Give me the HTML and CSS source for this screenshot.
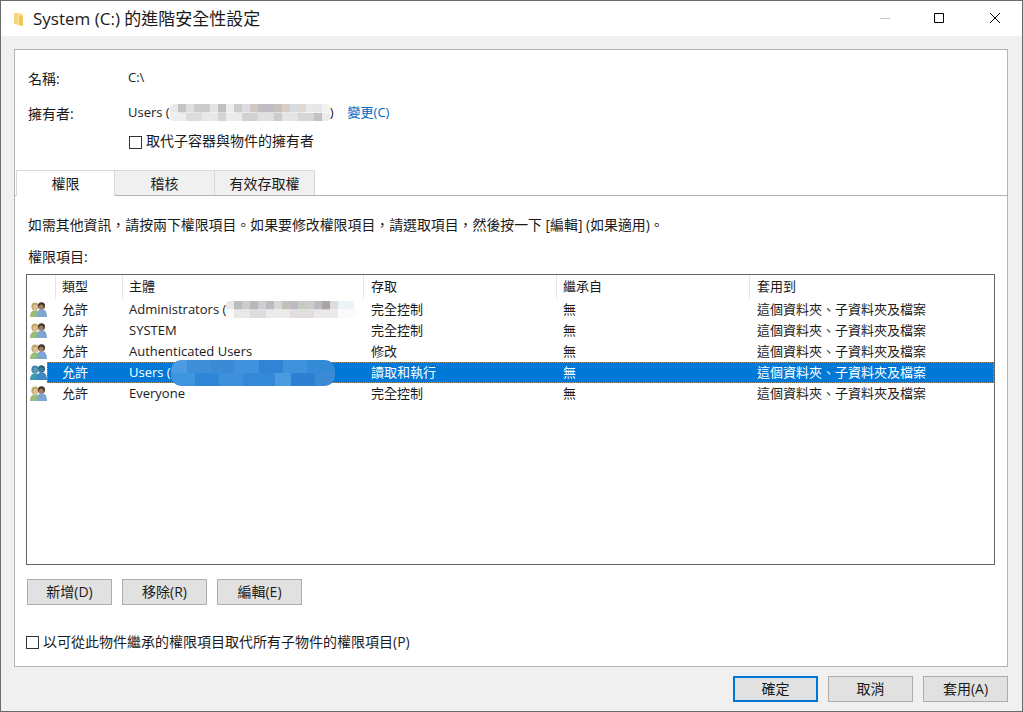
FILE: index.html
```html
<!DOCTYPE html>
<html lang="zh-Hant">
<head>
<meta charset="utf-8">
<title>System (C:) 的進階安全性設定</title>
<link rel="stylesheet" href="styles.css">
</head>
<body>
<svg class="defs" width="0" height="0" aria-hidden="true">
  <symbol id="people" viewBox="0 0 17 16">
    <ellipse class="p-hair1" cx="5" cy="4.5" rx="3.6" ry="4"/>
    <ellipse class="p-face1" cx="5.4" cy="5.6" rx="2.3" ry="2.8"/>
    <path class="p-body1" d="M0 15c0-4 1.500-6 3.500-6.500h3c2 .5 3.500 2.500 3.500 6.500z"/>
    <ellipse class="p-hair2" cx="11.500" cy="3.800" rx="3.500" ry="3.600"/>
    <ellipse class="p-face2" cx="11.300" cy="5.300" rx="2.300" ry="2.700"/>
    <path class="p-body2" d="M6.500 15c0-4 1.500-7 3.500-7.500h3.500c2 .5 3.500 3.500 3.500 7.500z"/>
  </symbol>
</svg>
<div class="window">
  <header class="titlebar">
    <svg class="folder" width="12" height="15" viewBox="0 0 12 15" aria-hidden="true">
      <path d="M1 1h5v12l-5-1z" fill="#f6d67a"/>
      <path d="M5 0.500l5 1.500v12l-5-1z" fill="#fbe49c"/>
      <path d="M6 3l4 1v10l-4-1z" fill="#efc55c"/>
    </svg>
    <h1 class="title">System (C:) 的進階安全性設定</h1>
    <div class="controls">
      <svg width="55" height="35" viewBox="0 0 55 35" aria-hidden="true"><path class="ctl-off" d="M23 17.500h10"/></svg>
      <svg width="55" height="35" viewBox="0 0 55 35" aria-hidden="true"><path class="ctl" d="M22.500 12.500h9v9h-9z"/></svg>
      <svg width="55" height="35" viewBox="0 0 55 35" aria-hidden="true"><path class="ctl" d="M23 12l10 10M33 12L23 22"/></svg>
    </div>
  </header>

  <main class="panel">
    <div class="info">
      <span class="label">名稱:</span>
      <span class="value">C:\</span>
      <span class="label">擁有者:</span>
      <span class="value">Users (<span class="mosaic mosaic-owner"></span>)<a class="link" href="#">變更(C)</a></span>
      <span></span>
      <label class="check check-top"><span class="box"></span>取代子容器與物件的擁有者</label>
    </div>

    <nav class="tabs">
      <span class="tab tab-active">權限</span>
      <span class="tab">稽核</span>
      <span class="tab">有效存取權</span>
    </nav>

    <p class="desc">如需其他資訊，請按兩下權限項目。如果要修改權限項目，請選取項目，然後按一下 [編輯] (如果適用)。</p>
    <p class="list-title">權限項目:</p>

    <section class="list">
      <div class="head">
        <span class="hcell hcell-icon"></span>
        <span class="hcell">類型</span>
        <span class="hcell">主體</span>
        <span class="hcell">存取</span>
        <span class="hcell">繼承自</span>
        <span class="hcell">套用到</span>
      </div>
      <div class="row">
        <svg class="icon"><use href="#people"/></svg>
        <div class="cells">
          <span class="cell cell-type">允許</span>
          <span class="cell">Administrators (<span class="mosaic mosaic-admin"></span></span>
          <span class="cell">完全控制</span>
          <span class="cell">無</span>
          <span class="cell">這個資料夾、子資料夾及檔案</span>
        </div>
      </div>
      <div class="row">
        <svg class="icon"><use href="#people"/></svg>
        <div class="cells">
          <span class="cell cell-type">允許</span>
          <span class="cell">SYSTEM</span>
          <span class="cell">完全控制</span>
          <span class="cell">無</span>
          <span class="cell">這個資料夾、子資料夾及檔案</span>
        </div>
      </div>
      <div class="row">
        <svg class="icon"><use href="#people"/></svg>
        <div class="cells">
          <span class="cell cell-type">允許</span>
          <span class="cell">Authenticated Users</span>
          <span class="cell">修改</span>
          <span class="cell">無</span>
          <span class="cell">這個資料夾、子資料夾及檔案</span>
        </div>
      </div>
      <div class="row row-selected">
        <svg class="icon"><use href="#people"/></svg>
        <div class="cells">
          <span class="cell cell-type">允許</span>
          <span class="cell">Users (<span class="mosaic mosaic-selected"></span></span>
          <span class="cell">讀取和執行</span>
          <span class="cell">無</span>
          <span class="cell">這個資料夾、子資料夾及檔案</span>
        </div>
      </div>
      <div class="row">
        <svg class="icon"><use href="#people"/></svg>
        <div class="cells">
          <span class="cell cell-type">允許</span>
          <span class="cell">Everyone</span>
          <span class="cell">完全控制</span>
          <span class="cell">無</span>
          <span class="cell">這個資料夾、子資料夾及檔案</span>
        </div>
      </div>
    </section>

    <div class="actions">
      <button class="btn" type="button">新增(D)</button>
      <button class="btn" type="button">移除(R)</button>
      <button class="btn" type="button">編輯(E)</button>
    </div>

    <label class="check check-bottom"><span class="box"></span>以可從此物件繼承的權限項目取代所有子物件的權限項目(P)</label>
  </main>

  <footer class="footer">
    <button class="btn btn-primary" type="button">確定</button>
    <button class="btn" type="button">取消</button>
    <button class="btn" type="button">套用(A)</button>
  </footer>
</div>
</body>
</html>
```
FILE: styles.css
```css
* { box-sizing: border-box; }
html, body { margin: 0; padding: 0; }
body {
  width: 1023px;
  height: 712px;
  overflow: hidden;
  background: #f0f0f0;
  color: #1a1a1a;
  font-family: "Open Sans", "Noto Sans CJK TC", sans-serif;
  font-size: 14px;
}
.defs { position: absolute; }

.window {
  width: 1023px;
  height: 712px;
  display: flex;
  flex-direction: column;
  border: 1px solid #6b6b6b;
  background: #f0f0f0;
}

.titlebar {
  height: 35px;
  flex: none;
  display: flex;
  align-items: center;
  background: #fff;
  padding-left: 12px;
}
.folder { flex: none; margin-top: 1px; }
.title {
  margin: -2px 0 0 8px;
  font-size: 17px;
  font-weight: 400;
  color: #1a1a1a;
  flex: 1;
  white-space: nowrap;
}
.controls { display: flex; align-self: flex-start; }
.controls svg { display: block; }
.ctl { fill: none; stroke: #000; stroke-width: 1; }
.ctl-off { fill: none; stroke: #c4c4c4; stroke-width: 1; }

.panel {
  flex: 1;
  min-height: 0;
  margin: 13px 14px 0 13px;
  background: #fff;
  border: 1px solid #b4b4b4;
  display: flex;
  flex-direction: column;
  padding: 19px 12px 16px 11px;
}

.info {
  display: grid;
  grid-template-columns: 100px 1fr;
  margin-left: 2px;
  row-gap: 16px;
  line-height: 18px;
}
.value { font-size: 13px; white-space: nowrap; margin-top: -1px; }
.label { font-size: 14px; margin-top: 1px; }
.link { color: #0067c0; text-decoration: none; margin-left: 14px; }
.check-top { margin-top: -7px; margin-left: 1px; }

.check {
  display: flex;
  align-items: center;
  height: 18px;
  font-size: 14px;
  white-space: nowrap;
}
.box {
  width: 13px;
  height: 13px;
  border: 1px solid #333;
  background: #fff;
  margin: 2px 4px 0 0;
  flex: none;
}
.check-bottom { margin-top: 27px; }
.check-bottom .box { margin-top: 3px; }

.tabs {
  display: flex;
  margin: 20px -12px 0 -11px;
  padding-left: 1px;
  height: 26px;
  border-bottom: 1px solid #b4b4b4;
  flex: none;
}
.tab {
  width: 100px;
  height: 25px;
  background: #f0f0f0;
  border: 1px solid #d9d9d9;
  border-bottom: 0;
  border-left: 0;
  text-align: center;
  line-height: 26px;
  font-size: 14px;
}
.tab-active {
  width: 99px;
  height: 26px;
  background: #fff;
  border-left: 1px solid #d9d9d9;
}

.desc {
  margin: 20px 0 0 2px;
  line-height: 18px;
  font-size: 13.900px;
  white-space: nowrap;
}
.list-title {
  margin: 14px 0 0 2px;
  line-height: 18px;
  font-size: 14px;
}

.list {
  flex: 1;
  min-height: 0;
  margin-top: 8px;
  border: 1px solid #646464;
  font-size: 13px;
}
.head {
  display: grid;
  grid-template-columns: 28px 67px 241px 193px 193px 1fr;
  height: 24px;
}
.hcell {
  border-left: 1px solid #e5e5e5;
  padding-left: 6px;
  line-height: 22px;
  white-space: nowrap;
}
.hcell:nth-child(4), .hcell:nth-child(6) { padding-left: 7px; }
.hcell-icon { padding: 0; border-left: 0; }
.row {
  display: flex;
  height: 21px;
}
.icon {
  width: 17px;
  height: 16px;
  flex: none;
  margin: 3px 0 0 3px;
}
.cells {
  flex: 1;
  display: grid;
  grid-template-columns: 74px 241px 193px 193px 1fr;
  border: 1px solid transparent;
}
.cell {
  padding-left: 7px;
  line-height: 19px;
  white-space: nowrap;
}
.cell:nth-child(3), .cell:nth-child(5) { padding-left: 8px; }
.cell-type { padding-left: 14px; }

.row-selected .cells {
  --dots-x: repeating-linear-gradient(90deg, #ee8a22 0 1px, #5f5a48 1px 2px);
  --dots-y: repeating-linear-gradient(180deg, #ee8a22 0 1px, #5f5a48 1px 2px);
  background:
    var(--dots-x) top / 100% 1px no-repeat border-box,
    var(--dots-x) bottom / 100% 1px no-repeat border-box,
    var(--dots-y) left / 1px 100% no-repeat border-box,
    var(--dots-y) right / 1px 100% no-repeat border-box,
    #0078d7 border-box;
  color: #fff;
}

.p-hair1 { fill: var(--hair1); }
.p-face1 { fill: var(--face1); }
.p-body1 { fill: var(--body1); }
.p-hair2 { fill: var(--hair2); }
.p-face2 { fill: var(--face2); }
.p-body2 { fill: var(--body2); }
.icon {
  --hair1: #bfa76a;
  --face1: #e0bf98;
  --body1: #97bd78;
  --hair2: #3f3228;
  --face2: #a97d5c;
  --body2: #7ea6d0;
}
.row-selected .icon {
  --hair1: #3f86a8;
  --face1: #5c9cbc;
  --body1: #3f9ab0;
  --hair2: #25607f;
  --face2: #3d7da0;
  --body2: #3f87c4;
}

.mosaic {
  display: inline-block;
  vertical-align: middle;
  background-repeat: no-repeat;
  background-size: 100% 50%;
  background-position: top, bottom;
  border-radius: 4px;
  filter: blur(0.6px);
}
.mosaic-owner {
  width: 160px;
  height: 17px;
  margin-top: -2px;
  background-image:
    linear-gradient(90deg, #e9e9e9 0 8px, #c4c4c4 8px 16px, #dedede 16px 24px, #cbcbcb 24px 40px, #e4e4e4 40px 48px, #bfbfbf 48px 56px, #ececec 56px 64px, #cccccc 64px 72px, #dcdce4 72px 80px, #cfc8c0 80px 88px, #bfbcc4 88px 104px, #c6c2bc 104px 112px, #dccdc4 112px 120px, #d3dde6 120px 128px, #dedad2 128px 136px, #e8e8e8 136px 152px, #f2f2f2 152px),
    linear-gradient(90deg, #eeeeee 0 16px, #dcdcdc 16px 32px, #e8e8e8 32px 48px, #d4d4d4 48px 56px, #ececec 56px 72px, #d2d2d2 72px 88px, #e0e0e0 88px 104px, #cccccc 104px 112px, #e4e4e4 112px 128px, #d6d6d6 128px 144px, #c2c2c2 144px 152px, #ececec 152px);
}
.mosaic-admin {
  width: 130px;
  height: 17px;
  margin-top: -2px;
  background-image:
    linear-gradient(90deg, #e8e8e8 0 8px, #bcbcbc 8px 16px, #cccccc 16px 24px, #b8b8b8 24px 32px, #d0ccd4 32px 40px, #bcbcbc 40px 48px, #d6d6d6 48px 56px, #c6c0ba 56px 64px, #bfb9c4 64px 72px, #c6ccc2 72px 80px, #cccccc 80px 88px, #bdbac2 88px 96px, #aaa4a4 96px 104px, #dcdcdc 104px 112px, #edf4f8 112px 128px, #fff 128px),
    linear-gradient(90deg, #fafafa 0 8px, #e8e8e8 8px 24px, #dddddd 24px 40px, #ebebeb 40px 64px, #e2dede 64px 88px, #ebe9e9 88px 112px, #fbfbfb 112px);
}
.mosaic-selected {
  width: 164px;
  height: 26px;
  margin: -7px 0 -5px 0;
  position: relative;
  border-radius: 10px;
  background-image:
    linear-gradient(90deg, #4a9be0 0 16px, #3f8fd8 16px 40px, #3a8ad6 40px 64px, #3f92dd 64px 88px, #2f84d6 88px 112px, #3e93dc 112px 136px, #338bd8 136px),
    linear-gradient(90deg, #3f94de 0 24px, #2f86d6 24px 48px, #3e90da 48px 72px, #3488d8 72px 104px, #4a9be0 104px 120px, #2d7fd4 120px 144px, #3a8ad6 144px);
}

.actions {
  display: flex;
  gap: 10px;
  margin: 14px 0 0 1px;
  flex: none;
}
.btn {
  width: 85px;
  height: 26px;
  padding: 0;
  background: #e1e1e1;
  border: 1px solid #adadad;
  border-radius: 0;
  font: inherit;
  font-size: 14px;
  color: #1a1a1a;
  line-height: 22px;
}
.btn-primary { border: 2px solid #0078d7; }

.footer {
  flex: none;
  display: flex;
  justify-content: flex-end;
  gap: 10px;
  padding: 9px 14px 9px 0;
}
```
